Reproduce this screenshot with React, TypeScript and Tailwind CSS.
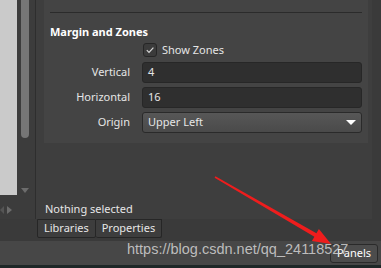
export default function App() {
  return (
    <div className="relative w-[381px] h-[268px] overflow-hidden bg-[#3a3a3a] flex flex-col font-['Noto_Sans',sans-serif] text-[#e6e6e6]">
      <div className="flex h-[219px]">
        {/* canvas + scrollbars */}
        <div className="w-[36px] flex flex-col border-r border-[#2e2e2e] bg-[#3c3c3c]">
          <div className="flex h-[195px]">
            <div className="w-[17px] bg-[#cacaca]" />
            <div className="w-[4px]" />
            <div className="w-[8px] flex flex-col items-center">
              <div className="w-[8px] h-[138px] bg-[#767676] rounded-b-[4px]" />
              <div className="flex-1" />
              <div className="w-0 h-0 border-l-[4px] border-r-[4px] border-t-[5px] border-l-transparent border-r-transparent border-t-[#6c6c6c] mb-[2px]" />
            </div>
          </div>
          <div className="flex items-center gap-[3px] mt-[11px]">
            <div className="w-0 h-0 border-t-[4px] border-b-[4px] border-r-[4px] border-t-transparent border-b-transparent border-r-[#555]" />
            <div className="w-0 h-0 border-t-[4px] border-b-[4px] border-l-[5px] border-t-transparent border-b-transparent border-l-[#6c6c6c]" />
          </div>
        </div>

        {/* properties panel */}
        <div className="flex-1 flex flex-col bg-[#3e3e3e]">
          <div className="flex">
            <div className="ml-[8px] w-[324px] h-[143px] bg-[#444444] px-[6px] flex flex-col">
              <div className="mt-[12px] h-px bg-[#2b2b2b]" />
              <div className="mt-[11px] text-[11px] leading-[16px] font-bold text-white">Margin and Zones</div>
              <div className="mt-[3px] flex">
                <div className="w-[80px]" />
                <div className="ml-[13px] flex items-center gap-[5px] h-[14px]">
                  <div className="w-[14px] h-[14px] rounded-[3px] border border-[#262626] bg-[#3b3b3b] flex items-center justify-center">
                    <svg width="10" height="10" viewBox="0 0 10 10">
                      <path d="M1.8 5.2 L4 7.4 L8.4 2.6" fill="none" stroke="#d8d8d8" strokeWidth="1.2" />
                    </svg>
                  </div>
                  <span className="text-[11px] leading-[14px]">Show Zones</span>
                </div>
              </div>
              <div className="mt-[5px] grid grid-cols-[80px_220px] gap-x-[12px] gap-y-[4px] items-center text-[11px]">
                <span className="text-right">Vertical</span>
                <div className="h-[21px] rounded-[3px] bg-[#2f2f2f] border border-[#272727] px-[5px] flex items-center">4</div>
                <span className="text-right">Horizontal</span>
                <div className="h-[21px] rounded-[3px] bg-[#2f2f2f] border border-[#272727] px-[5px] flex items-center">16</div>
                <span className="text-right">Origin</span>
                <div className="h-[21px] rounded-[3px] bg-gradient-to-b from-[#575757] to-[#4a4a4a] border border-[#2a2a2a] px-[5px] flex items-center justify-between">
                  <span>Upper Left</span>
                  <div className="w-0 h-0 border-l-[5px] border-r-[5px] border-t-[5px] border-l-transparent border-r-transparent border-t-white" />
                </div>
              </div>
            </div>
            <div className="w-[4px]" />
            <div className="flex-1 h-[219px] bg-[#3a3a3a]" />
          </div>
          <div className="-mt-[76px] flex-1 flex items-end pb-[2px] pl-[9px] text-[11px] w-[200px]">Nothing selected</div>
        </div>
      </div>

      {/* tabs */}
      <div className="h-[22px] flex pl-[37px] bg-[#3a3a3a] text-[11px]">
        <div className="h-[19px] px-[6px] flex items-center border border-[#262626] rounded-b-[2px] bg-[#3d3d3d]">Libraries</div>
        <div className="h-[19px] px-[6px] flex items-center border border-l-0 border-[#262626] rounded-b-[2px] bg-[#3d3d3d]">Properties</div>
      </div>

      {/* footer */}
      <div className="h-[24px] bg-[#474747] flex justify-end items-center pr-[3px]">
        <div className="h-[19px] px-[6px] flex items-center border border-[#2a2a2a] rounded-[3px] bg-[#4c4c4c] text-[11px] text-white">Panels</div>
      </div>
      <div className="h-[3px] bg-[#1e2727]" />

      {/* watermark */}
      <div className="absolute left-[127px] top-[239px] text-[14.5px] leading-[20px] font-['Liberation_Sans',sans-serif] text-[#d4d4d4]/85">
        https://blog.csdn.net/qq_24118527
      </div>

      {/* red arrow */}
      <svg className="absolute left-0 top-0 pointer-events-none" width="381" height="268" viewBox="0 0 381 268">
        <polygon
          points="214.6,177.7 215.4,176.3 316.4,233.3 318.9,228.9 331,244 311.9,241.1 314.4,236.7"
          fill="#ee1d1d"
        />
      </svg>
    </div>
  );
}
